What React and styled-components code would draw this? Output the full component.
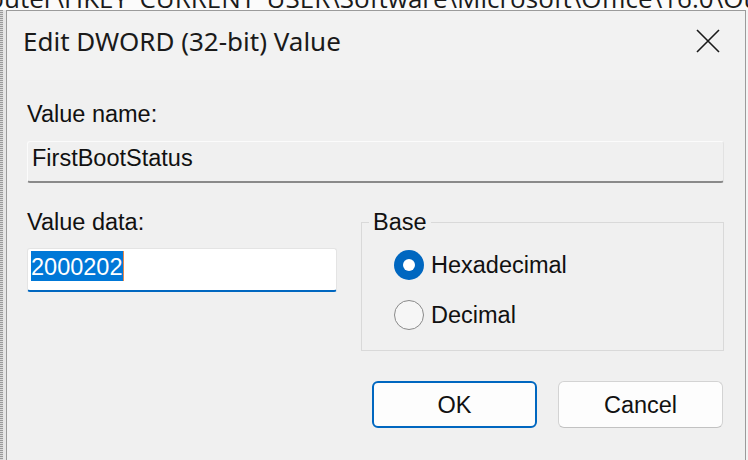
import React from "react";
import styled, { createGlobalStyle } from "styled-components";

const GlobalStyle = createGlobalStyle`
  html, body {
    margin: 0;
    padding: 0;
    background: #ffffff;
  }
`;

const Screen = styled.div`
  width: 748px;
  height: 460px;
  overflow: hidden;
  display: grid;
  grid-template-rows: 10px 1fr;
  grid-template-columns: 6px 1fr 2px;
  background: #ffffff;
`;

const AddressStrip = styled.div`
  grid-column: 1 / -1;
  overflow: hidden;
  background: #fbfbfb;
  white-space: nowrap;
`;

const AddressText = styled.div`
  font-family: "Open Sans", "Noto Sans", sans-serif;
  font-size: 26px;
  line-height: 28px;
  color: #1b1b1b;
  margin-top: -16px;
  margin-left: -68px;
`;

const TreeEdge = styled.div`
  background: repeating-linear-gradient(
    to bottom,
    #9a9a9a 0 1px,
    #d8d8d8 1px 2px
  );
  border-right: 3px solid #e6e6e6;
`;

const ListEdge = styled.div`
  background: #f4f4f4;
`;

const Dialog = styled.div`
  display: flex;
  flex-direction: column;
  border: 1px solid #9b9b9b;
  border-bottom: none;
  background: #f0f0f0;
  font-family: "Liberation Sans", Arial, sans-serif;
  color: #111111;
`;

const TitleBar = styled.div`
  display: flex;
  align-items: center;
  justify-content: space-between;
  padding: 15px 25px 24px 16px;
  background: #f2f2f2;
`;

const Title = styled.div`
  font-family: "Noto Sans", "Open Sans", sans-serif;
  font-size: 26px;
  line-height: 30px;
  color: #1a1a1a;
`;

const CloseButton = styled.div`
  display: flex;
  width: 24px;
  height: 24px;
  align-items: center;
  justify-content: center;
`;

const Body = styled.div`
  display: flex;
  flex-direction: column;
  padding: 21px 21px 0 20px;
`;

const Label = styled.div`
  font-size: 23.5px;
  line-height: 26px;
`;

const NameField = styled.div`
  margin-top: 14px;
  height: 42px;
  box-sizing: border-box;
  padding: 3px 0 0 4px;
  font-size: 23.5px;
  line-height: 26px;
  background: #f0f0f0;
  border: 1px solid #e2e2e2;
  border-top-color: #fbfbfb;
  border-left-color: #fbfbfb;
  border-bottom: 2px solid #8a8a8a;
  border-radius: 3px;
`;

const DataRow = styled.div`
  display: flex;
  gap: 24px;
  margin-top: 26px;
  align-items: flex-start;
`;

const DataColumn = styled.div`
  display: flex;
  flex-direction: column;
  width: 310px;
`;

const DataField = styled.div`
  margin-top: 13px;
  height: 44px;
  box-sizing: border-box;
  padding: 2px 0 0 3px;
  background: #ffffff;
  border: 1px solid #e4e4e4;
  border-bottom: 2px solid #0067c0;
  border-radius: 3px;
`;

const Selected = styled.span`
  display: inline-block;
  height: 30px;
  padding-top: 3px;
  box-sizing: border-box;
  font-size: 23.5px;
  line-height: 26px;
  color: #ffffff;
  background: #0078d7;
  border-right: 1px solid #e8874a;
`;

const BaseGroup = styled.fieldset`
  flex: 1;
  margin: 0;
  padding: 15px 0 20px 0;
  border: 1px solid #d9d9d9;
`;

const Legend = styled.legend`
  margin-left: 7px;
  padding: 0 4px;
  font-size: 23.5px;
  line-height: 26px;
`;

const RadioList = styled.div`
  display: flex;
  flex-direction: column;
  gap: 20px;
  padding-left: 32px;
`;

const RadioRow = styled.div`
  display: flex;
  align-items: center;
  height: 30px;
  gap: 7px;
  font-size: 23.5px;
  line-height: 26px;
`;

const RadioDot = styled.span`
  position: relative;
  width: 30px;
  height: 30px;
  box-sizing: border-box;
  border-radius: 50%;
  background: ${p => (p.checked ? "#0067c0" : "#f6f6f6")};
  border: ${p => (p.checked ? "none" : "1.5px solid #8a8a8a")};

  &::after {
    content: "";
    display: ${p => (p.checked ? "block" : "none")};
    position: absolute;
    left: 50%;
    top: 50%;
    width: 12px;
    height: 12px;
    margin: -6px 0 0 -6px;
    border-radius: 50%;
    background: #ffffff;
  }
`;

const ButtonRow = styled.div`
  display: flex;
  justify-content: flex-end;
  gap: 21px;
  margin-top: 30px;
  padding-right: 1px;
`;

const Button = styled.div`
  width: 165px;
  height: 47px;
  box-sizing: border-box;
  display: flex;
  align-items: center;
  justify-content: center;
  font-size: 23.5px;
  line-height: 26px;
  background: #fdfdfd;
  border-radius: 6px;
  border: ${p => (p.primary ? "2px solid #0067c0" : "1px solid #d3d3d3")};
  border-bottom-color: ${p => (p.primary ? "#0067c0" : "#c2c2c2")};
`;

const RADIOS = [
  { label: "Hexadecimal", checked: true },
  { label: "Decimal", checked: false },
];

export default function App() {
  return (
    <>
      <GlobalStyle />
      <Screen>
        <AddressStrip>
          <AddressText>
            Computer\HKEY_CURRENT_USER\Software\Microsoft\Office\16.0\Outlook
          </AddressText>
        </AddressStrip>
        <TreeEdge />
        <Dialog>
          <TitleBar>
            <Title>Edit DWORD (32-bit) Value</Title>
            <CloseButton>
              <svg width="24" height="24" viewBox="0 0 24 24">
                <path
                  d="M1 1 L23 23 M23 1 L1 23"
                  stroke="#1a1a1a"
                  strokeWidth="1.6"
                  fill="none"
                />
              </svg>
            </CloseButton>
          </TitleBar>
          <Body>
            <Label>Value name:</Label>
            <NameField>FirstBootStatus</NameField>
            <DataRow>
              <DataColumn>
                <Label>Value data:</Label>
                <DataField>
                  <Selected>2000202</Selected>
                </DataField>
              </DataColumn>
              <BaseGroup>
                <Legend>Base</Legend>
                <RadioList>
                  {RADIOS.map(r => (
                    <RadioRow key={r.label}>
                      <RadioDot checked={r.checked} />
                      {r.label}
                    </RadioRow>
                  ))}
                </RadioList>
              </BaseGroup>
            </DataRow>
            <ButtonRow>
              <Button primary>OK</Button>
              <Button>Cancel</Button>
            </ButtonRow>
          </Body>
        </Dialog>
        <ListEdge />
      </Screen>
    </>
  );
}
